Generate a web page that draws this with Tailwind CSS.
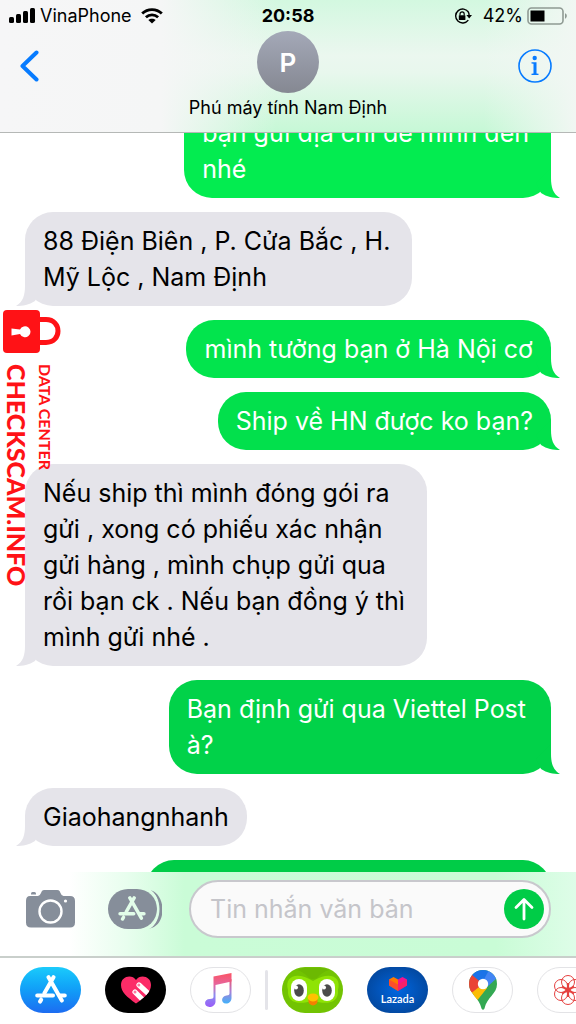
<!DOCTYPE html>
<html lang="vi">

<head>
    <meta charset="UTF-8" />
    <meta name="viewport" content="width=device-width, initial-scale=1" />
    <title>Phú máy tính Nam Định</title>
    <script src="https://cdn.jsdelivr.net/npm/@tailwindcss/browser@4"></script>
</head>

<body class="relative h-screen flex flex-col overflow-hidden bg-white text-black font-['Inter','Liberation_Sans',sans-serif]">

    <!-- Shared shapes -->
    <svg class="hidden">
        <symbol id="tail" viewBox="0 0 24 30">
            <path d="M15 0V10C15 19 17 26 24 30C17 30 11 29 5 25L0 15Z" />
        </symbol>
        <symbol id="store" viewBox="0 0 32 30">
            <g fill="none" stroke="currentColor" stroke-width="4" stroke-linecap="round">
                <path d="M13.500 2.200 16 6.500M18.500 2.200 9.500 18M16 6.500 26.800 25.600" />
                <path d="M2.200 20.400H18M25 20.400H29.800M6.200 24.600 5 26.600" />
            </g>
        </symbol>
    </svg>

    <!-- Header -->
    <header class="relative z-10 shrink-0 pb-[9px] border-b border-[#b5b8b6] bg-[linear-gradient(to_right,#f6f6f7_0%,#f5f6f6_28%,#f5f6f600_48%,#f5f6f600_84%,#f1f7f3_100%),linear-gradient(to_bottom,#d3f8e0_0%,#ebf7ef_42%,#e8f7ed_55%,#c6f8d6_100%)]">
        <div class="h-[31px] px-[9px] grid grid-cols-[1fr_auto_1fr] items-center text-lg">
            <div class="flex items-center gap-[5px]">
                <svg class="w-[26px] h-4" viewBox="0 0 26 16">
                    <rect x="0" y="9" width="5" height="6" rx="1.500" />
                    <rect x="7" y="6" width="5" height="9" rx="1.500" />
                    <rect x="14" y="3" width="5" height="12" rx="1.500" />
                    <rect x="21" y="0" width="5" height="15" rx="1.500" />
                </svg>
                <span>VinaPhone</span>
                <svg class="ml-1 w-[22px] h-4" viewBox="0 0 22 16">
                    <g fill="none" stroke="#000" stroke-width="2.800">
                        <path d="M1.200 5.600C6.600.2 15.400.2 20.800 5.600" />
                        <path d="M4.900 9.300C8.400 6 13.600 6 17.100 9.300" />
                    </g>
                    <path d="M11 15.500 7.300 11.900C9.300 10.200 12.700 10.200 14.700 11.900Z" />
                </svg>
            </div>
            <span class="font-bold">20:58</span>
            <div class="flex items-center justify-end">
                <svg class="mr-[11px] w-[18px] h-4" viewBox="0 0 18 16">
                    <path d="M14.600 4.300A7 7 0 1 0 14.300 12.200M13.800 3.200A7 7 0 0 1 15 8.500" fill="none" stroke="#000" stroke-width="1.400" />
                    <path d="M12.400 7H18L15.200 10.400Z" />
                    <rect x="4.800" y="7.200" width="6.600" height="4.800" rx=".6" />
                    <path d="M6 7.500V6A2.100 2.100 0 0 1 10.200 6V7.500" fill="none" stroke="#000" stroke-width="1.200" />
                </svg>
                <span>42%</span>
                <svg class="ml-1 -mr-[1px] w-[41px] h-[18px]" viewBox="0 0 41 18">
                    <rect x="1" y="1" width="35" height="16" rx="3.500" fill="none" stroke="#8f9a93" stroke-width="1.600" />
                    <rect x="3.500" y="3.500" width="14" height="11" />
                    <path d="M38 6.300C40.400 7 40.400 11 38 11.700Z" fill="#8f9a93" />
                </svg>
            </div>
        </div>
        <div class="px-[19px] grid grid-cols-[1fr_auto_1fr] items-start">
            <div class="h-[70px] flex items-center">
                <button type="button" aria-label="Quay lại">
                    <svg class="w-5 h-8" viewBox="0 0 20 32" fill="none" stroke="#077bff" stroke-width="4" stroke-linecap="round" stroke-linejoin="round">
                        <path d="M17.500 2.500 3.500 16 17.500 29.500" />
                    </svg>
                </button>
            </div>
            <div class="flex flex-col items-center">
                <div class="w-[62px] h-[62px] rounded-full bg-linear-to-b from-[#a4a9b8] to-[#858892] flex items-center justify-center text-white text-[26px] font-semibold">P</div>
                <h1 class="text-lg leading-[30px]">Phú máy tính Nam Định</h1>
            </div>
            <div class="h-[70px] pr-[5px] flex items-center justify-end">
                <button type="button" aria-label="Thông tin">
                    <svg class="w-[34px] h-[34px]" viewBox="0 0 34 34">
                        <circle cx="17" cy="17" r="16" fill="none" stroke="#077bff" stroke-width="1.600" />
                        <circle cx="16.700" cy="9" r="2.200" fill="#077bff" />
                        <path d="M13.500 13.200H18.500V24.400L20.500 24.800V26H13.500V24.800L15.500 24.400V14.800L13.500 14.400Z" fill="#077bff" />
                    </svg>
                </button>
            </div>
        </div>
    </header>

    <!-- Messages -->
    <main class="flex-1 min-h-0 overflow-hidden px-[25px] text-[25px] leading-9">
        <div class="-mt-[29px] flex flex-col gap-[14px]">
            <div class="relative self-end rounded-[28px] bg-[#03ec50] text-white pl-[18px] pr-[22px] py-[11px]">
                bạn gửi địa chỉ để mình đến<br>nhé
                <svg class="absolute bottom-0 -right-[9px] w-6 h-[30px] fill-[#03ec50]"><use href="#tail" /></svg>
            </div>
            <div class="relative self-start rounded-[28px] bg-[#e5e4ea] pl-[18px] pr-[22px] py-[11px]">
                88 Điện Biên , P. Cửa Bắc , H.<br>Mỹ Lộc , Nam Định
                <svg class="absolute bottom-0 -left-[9px] w-6 h-[30px] -scale-x-100 fill-[#e5e4ea]"><use href="#tail" /></svg>
            </div>
            <div class="relative self-end rounded-[28px] bg-[#02e44d] text-white px-[18px] py-[11px]">
                mình tưởng bạn ở Hà Nội cơ
                <svg class="absolute bottom-0 -right-[9px] w-6 h-[30px] fill-[#02e44d]"><use href="#tail" /></svg>
            </div>
            <div class="relative self-end rounded-[28px] bg-[#02e04c] text-white px-[18px] py-[11px]">
                Ship về HN được ko bạn?
                <svg class="absolute bottom-0 -right-[9px] w-6 h-[30px] fill-[#02e04c]"><use href="#tail" /></svg>
            </div>
            <div class="relative self-start rounded-[28px] bg-[#e5e4ea] pl-[18px] pr-[22px] py-[11px]">
                Nếu ship thì mình đóng gói ra<br>gửi , xong có phiếu xác nhận<br>gửi hàng , mình chụp gửi qua<br>rồi bạn ck . Nếu bạn đồng ý thì<br>mình gửi nhé .
                <svg class="absolute bottom-0 -left-[9px] w-6 h-[30px] -scale-x-100 fill-[#e5e4ea]"><use href="#tail" /></svg>
            </div>
            <div class="relative self-end rounded-[28px] bg-[#01d249] text-white pl-[18px] pr-[25px] py-[11px]">
                Bạn định gửi qua Viettel Post<br>à?
                <svg class="absolute bottom-0 -right-[9px] w-6 h-[30px] fill-[#01d249]"><use href="#tail" /></svg>
            </div>
            <div class="relative self-start rounded-[28px] bg-[#e5e4ea] px-[18px] py-[11px]">
                Giaohangnhanh
                <svg class="absolute bottom-0 -left-[9px] w-6 h-[30px] -scale-x-100 fill-[#e5e4ea]"><use href="#tail" /></svg>
            </div>
            <div class="self-end w-[77%] h-24 rounded-[28px] bg-[#00cc47]"></div>
        </div>
    </main>

    <!-- Compose bar -->
    <form class="shrink-0 px-[25px] pt-2 pb-[18px] flex items-center bg-[linear-gradient(to_right,#ffffff_12%,#e8feee_22%,#cafcd7_32%,#c9fcd6_86%,#defde8_100%)]">
        <button type="button" aria-label="Máy ảnh" class="mr-8">
            <svg class="w-[51px] h-10" viewBox="0 0 51 40">
                <path d="M6 4.500Q6 3 7.500 3H9.500Q11 3 11 4.500V5.500H6Z" fill="#868e9a" />
                <path d="M5 7H13Q15 6.600 16 4L16.800 2.300Q17.500 1 19.500 1H32Q34 1 34.700 2.300L35.500 4Q36.500 7 38.500 7H45Q50 7 50 12V33.500Q50 38.500 45 38.500H6Q1 38.500 1 33.500V12Q1 7 5 7Z" fill="#868e9a" />
                <circle cx="25.500" cy="22.500" r="11" fill="none" stroke="#fff" stroke-width="2.400" />
                <circle cx="40.500" cy="12" r="1.600" fill="#fff" />
            </svg>
        </button>
        <button type="button" aria-label="Ứng dụng" class="mr-[27px] text-[#e2fde9]">
            <svg class="w-[54px] h-10" viewBox="0 0 54 40">
                <rect x="0" y="0" width="49" height="40" rx="20" fill="#868e9a" />
                <path d="M41 1C55 6 55 34 41 39.500C60 37 58 3 41 1Z" fill="#868e9a" />
                <path d="M41 1C53 7 53 33 41 39" fill="none" stroke="currentColor" stroke-width="1.600" />
                <use href="#store" x="10" y="7" width="28" height="26" />
            </svg>
        </button>
        <div class="flex-1 min-w-0 h-[58px] pl-[19px] pr-[5px] flex items-center rounded-full border-2 border-[#c8c8cd] bg-[#fafafa]">
            <input type="text" aria-label="Tin nhắn văn bản" placeholder="Tin nhắn văn bản"
                class="flex-1 min-w-0 text-[25px] leading-9 bg-transparent outline-none placeholder:text-[#c5c5ca]" />
            <button type="submit" aria-label="Gửi" class="w-10 h-10 rounded-full bg-[#00cc47] flex items-center justify-center">
                <svg class="w-5 h-6" viewBox="0 0 20 24" fill="none" stroke="#fff" stroke-width="2.800" stroke-linecap="round" stroke-linejoin="round">
                    <path d="M10 22V3M2 10.500 10 2.500 18 10.500" />
                </svg>
            </button>
        </div>
    </form>

    <!-- App drawer -->
    <nav class="shrink-0 h-[68px] pl-5 pb-[2px] flex items-center overflow-hidden bg-white border-t-2 border-[#c9cfcb]">
        <div class="flex gap-6">
            <button type="button" aria-label="App Store" class="shrink-0 w-[61px] h-[46px] rounded-full bg-linear-to-b from-[#1ccbfb] to-[#1d6cf1] flex items-center justify-center text-white">
                <svg class="w-8 h-[30px]"><use href="#store" /></svg>
            </button>
            <button type="button" aria-label="Digital Touch" class="shrink-0 w-[61px] h-[46px] rounded-full bg-black flex items-center justify-center">
                <svg class="w-8 h-[30px]" viewBox="0 0 32 30">
                    <clipPath id="heart">
                        <path d="M16 28.500C7 22 1 17 1 10C1 1 12-1 16 5C20-1 31 1 31 10C31 17 25 22 16 28.500Z" />
                    </clipPath>
                    <g clip-path="url(#heart)">
                        <rect width="32" height="30" fill="#fc2c68" />
                        <path d="M19 10 31 21M15 17 26 28" stroke="#fff" stroke-width="5.200" stroke-linecap="round" />
                    </g>
                    <circle cx="18.800" cy="9.900" r="1.500" fill="#fc7da2" />
                    <circle cx="15" cy="17" r="1.500" fill="#fc7da2" />
                </svg>
            </button>
            <button type="button" aria-label="Âm nhạc" class="shrink-0 w-[61px] h-[46px] rounded-full bg-white border border-[#e3e3e6] flex items-center justify-center">
                <svg class="-ml-1 w-[27px] h-[34px]" viewBox="0 0 27 34">
                    <defs>
                        <linearGradient id="note" x1="0" y1="0" x2="0" y2="1">
                            <stop offset="0" stop-color="#fb5464" />
                            <stop offset=".35" stop-color="#e566a0" />
                            <stop offset=".65" stop-color="#8b8cf0" />
                            <stop offset="1" stop-color="#9a5cf8" />
                        </linearGradient>
                        <linearGradient id="note2" x1="0" y1="0" x2="0" y2="1">
                            <stop offset="0" stop-color="#f5536a" />
                            <stop offset=".5" stop-color="#a97fd6" />
                            <stop offset="1" stop-color="#41b2fb" />
                        </linearGradient>
                    </defs>
                    <path d="M8.500 3.500 26.500 0V8.500L10.500 12V28.500C10.500 32 7.500 34 4.500 34C-1.500 34-1.500 26 5 26Q8.500 25.800 8.500 24Z" fill="url(#note)" />
                    <path d="M24.500 7 26.500 6V25C26.500 28.500 24 30.500 21 30.500C15.500 30.500 16 23 21.500 22.500Q24.500 22.300 24.500 20.500Z" fill="url(#note2)" />
                </svg>
            </button>
        </div>
        <div class="shrink-0 mx-[14px] w-[3px] h-10 rounded-full bg-[#e4e4e9]"></div>
        <div class="flex gap-6">
            <button type="button" aria-label="Duolingo" class="shrink-0 w-[61px] h-[46px] rounded-full overflow-hidden">
                <svg class="w-[61px] h-[46px]" viewBox="0 0 61 46">
                    <rect width="61" height="46" fill="#72c302" />
                    <path d="M6 23C2 9 15 4 31 14C47 4 60 9 56 23C57 36 46 38 31 34C16 38 5 36 6 23Z" fill="#8fe305" />
                    <path d="M15 3Q22 5 27 11Q31 13 35 11Q40 5 47 3L41 1H21Z" fill="#6cb902" />
                    <rect x="9" y="12" width="16" height="22" rx="8" fill="#fff" />
                    <rect x="37" y="12" width="16" height="22" rx="8" fill="#fff" />
                    <ellipse cx="17" cy="23.500" rx="4.800" ry="6.200" fill="#4b4b4b" />
                    <ellipse cx="45" cy="23.500" rx="4.800" ry="6.200" fill="#4b4b4b" />
                    <circle cx="14" cy="20.500" r="2" fill="#fff" />
                    <circle cx="42" cy="20.500" r="2" fill="#fff" />
                    <ellipse cx="31" cy="34" rx="4.600" ry="4.400" fill="#f48000" />
                    <path d="M25.500 31Q25.500 26.500 31 26.500Q36.500 26.500 36.500 31Q34.500 34.500 31 34.500Q27.500 34.500 25.500 31Z" fill="#ffc200" />
                </svg>
            </button>
            <button type="button" class="shrink-0 w-[61px] h-[46px] rounded-full bg-radial from-[#0066e0] to-[#033f8c] flex flex-col items-center justify-center text-white">
                <svg class="w-[18px] h-[14px]" viewBox="0 0 18 14">
                    <path d="M0 2.500 4.500 0 9 2.500V14L0 8.500Z" fill="#ff7a00" />
                    <path d="M18 2.500 13.500 0 9 2.500V14L18 8.500Z" fill="#f5148c" />
                    <path d="M0 2.500 9 7.500 18 2.500V8.500L9 14 0 8.500Z" fill="#fa2a4d" fill-opacity=".55" />
                </svg>
                <span class="mt-[2px] text-[11px] leading-[11px] font-semibold font-['Lato',sans-serif]">Lazada</span>
            </button>
            <button type="button" aria-label="Google Maps" class="shrink-0 w-[61px] h-[46px] rounded-full bg-white border border-[#e3e3e6] flex items-center justify-center">
                <svg class="w-7 h-10" viewBox="0 0 28 40">
                    <clipPath id="pin">
                        <path d="M14 0A14 14 0 0 1 28 14C28 24 18 27 15.500 38.500Q14 41 12.500 38.500C10 27 0 24 0 14A14 14 0 0 1 14 0Z" />
                    </clipPath>
                    <g clip-path="url(#pin)">
                        <rect width="28" height="40" fill="#34a853" />
                        <path d="M14 14 0 20V24L7 30 18 18Z" fill="#fbbc04" />
                        <path d="M14 14 3 4 0 6V20L3 22.500Z" fill="#ea4335" />
                        <path d="M14 14 2.500 4.500 6 0H20Z" fill="#1a73e8" />
                        <path d="M10 18.500 20 0 28 4V8L17 18Z" fill="#4285f4" />
                        <path d="M14 14 2 28 7 32 18 18Z" fill="#fbbc04" />
                    </g>
                    <circle cx="14" cy="14" r="5.200" fill="#fff" />
                </svg>
            </button>
            <button type="button" aria-label="Ứng dụng khác" class="shrink-0 w-[61px] h-[46px] rounded-full bg-white border border-[#e3e3e6] flex items-center justify-center">
                <svg class="w-[30px] h-[30px]" viewBox="0 0 30 30" fill="none" stroke="#e5413f">
                    <g stroke-width="1">
                        <circle cx="15" cy="7" r="6.500" />
                        <circle cx="15" cy="23" r="6.500" />
                        <circle cx="8" cy="11" r="6.500" />
                        <circle cx="22" cy="11" r="6.500" />
                        <circle cx="8" cy="19" r="6.500" />
                        <circle cx="22" cy="19" r="6.500" />
                    </g>
                    <path d="M15 8V22M9 11.500 21 18.500M21 11.500 9 18.500" stroke-width="2" />
                </svg>
            </button>
        </div>
    </nav>

    <!-- Watermark over the conversation -->
    <div class="absolute z-20 left-[3px] top-[309px] text-[#ff1216] font-['Lato',sans-serif] pointer-events-none">
        <svg class="w-[59px] h-[45px]" viewBox="0 0 59 45">
            <rect x="0" y="1" width="37" height="43" rx="4" fill="currentColor" />
            <path d="M36 10.500H43C59 10.500 59 33.500 43 33.500H36" fill="none" stroke="currentColor" stroke-width="5" />
            <path d="M8.500 19.500 17 20.500A5.500 5.500 0 1 1 17 25L8.500 26.500Z" fill="#fff" />
        </svg>
        <div class="mt-[10px] flex flex-row-reverse justify-end gap-1">
            <span class="[writing-mode:vertical-rl] text-base leading-5 font-bold">DATA CENTER</span>
            <span class="[writing-mode:vertical-rl] text-[25px] leading-7 font-black">CHECKSCAM.INFO</span>
        </div>
    </div>

</body>

</html>
